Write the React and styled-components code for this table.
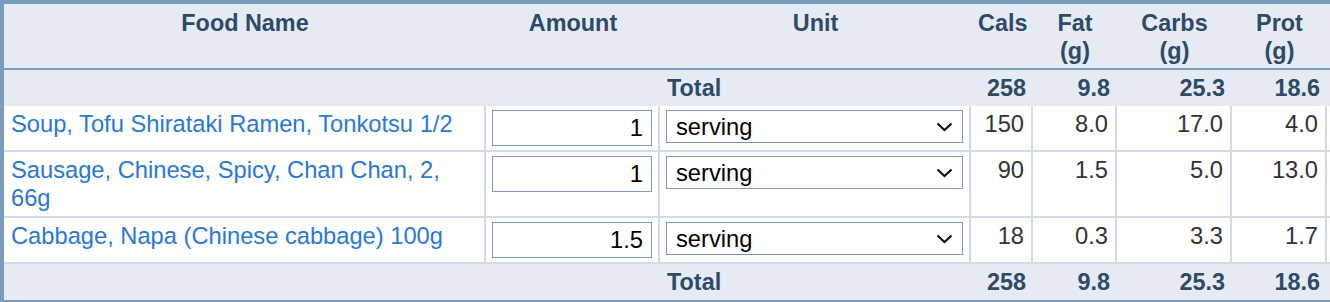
import React from "react";
import styled, { createGlobalStyle } from "styled-components";

const GlobalStyle = createGlobalStyle`
  body {
    margin: 0;
    background: #ffffff;
    overflow: hidden;
    font-family: "Liberation Sans", Arial, sans-serif;
  }
`;

const foods = [
  { name: "Soup, Tofu Shirataki Ramen, Tonkotsu 1/2", amount: "1", cals: "150", fat: "8.0", carbs: "17.0", prot: "4.0" },
  { name: "Sausage, Chinese, Spicy, Chan Chan, 2, 66g", amount: "1", cals: "90", fat: "1.5", carbs: "5.0", prot: "13.0" },
  { name: "Cabbage, Napa (Chinese cabbage) 100g", amount: "1.5", cals: "18", fat: "0.3", carbs: "3.3", prot: "1.7" },
];

const totals = { cals: "258", fat: "9.8", carbs: "25.3", prot: "18.6" };

const Table = styled.table`
  width: 1391px;
  table-layout: fixed;
  border-collapse: separate;
  border-spacing: 0;
  border: 4px solid #7a9cbc;
  font-family: "Liberation Sans", Arial, sans-serif;
  font-size: 23.7px;
  line-height: 28px;
`;

const HeadCell = styled.th`
  background: #e6ebf3;
  color: #2e4a66;
  font-size: 23.4px;
  font-weight: bold;
  text-align: center;
  vertical-align: top;
  padding: 5px 7px 3px;
  border-bottom: 2px solid #7a9cbc;
`;

const TotalCell = styled.td`
  background: #e6ebf3;
  color: #2e4a66;
  font-size: 23.4px;
  font-weight: bold;
  text-align: ${(p) => (p.$num ? "right" : "left")};
  vertical-align: top;
  padding: 4px 7px;
`;

const Cell = styled.td`
  background: #ffffff;
  color: #333333;
  vertical-align: top;
  text-align: ${(p) => (p.$num ? "right" : "left")};
  padding: ${(p) => (p.$control ? "4px 6px" : "4px 7px")};
  border-right: 2px solid #d3dbe6;
  border-bottom: 2px solid #d3dbe6;
`;

const FoodLink = styled.a`
  color: #2878d8;
  text-decoration: none;
  cursor: pointer;
`;

const AmountInput = styled.input`
  box-sizing: border-box;
  display: block;
  width: 160px;
  height: 36px;
  margin: 0;
  padding: 0 8px;
  border: 1px solid #7b9bbd;
  border-radius: 0;
  font-family: "Liberation Sans", Arial, sans-serif;
  font-size: 23.7px;
  color: #000000;
  text-align: right;
  background: #ffffff;
`;

const SelectWrap = styled.div`
  position: relative;
  width: 297px;
  height: 33px;
`;

const UnitSelect = styled.select`
  box-sizing: border-box;
  display: block;
  width: 100%;
  height: 33px;
  margin: 0;
  padding: 0 30px 0 9px;
  border: 1px solid #7b9bbd;
  border-radius: 0;
  appearance: none;
  -webkit-appearance: none;
  font-family: "Liberation Sans", Arial, sans-serif;
  font-size: 23.7px;
  color: #000000;
  background: #ffffff;
`;

const Chevron = styled.svg`
  position: absolute;
  right: 10px;
  top: 12px;
  width: 17px;
  height: 10px;
  pointer-events: none;
`;

const TotalRow = () => (
  <tr>
    <TotalCell />
    <TotalCell />
    <TotalCell>Total</TotalCell>
    <TotalCell $num>{totals.cals}</TotalCell>
    <TotalCell $num>{totals.fat}</TotalCell>
    <TotalCell $num>{totals.carbs}</TotalCell>
    <TotalCell $num>{totals.prot}</TotalCell>
    <TotalCell />
  </tr>
);

export default function App() {
  return (
    <>
      <GlobalStyle />
      <Table>
        <colgroup>
          <col style={{ width: 482 }} />
          <col style={{ width: 174 }} />
          <col style={{ width: 311 }} />
          <col style={{ width: 62 }} />
          <col style={{ width: 84 }} />
          <col style={{ width: 115 }} />
          <col style={{ width: 95 }} />
          <col style={{ width: 60 }} />
        </colgroup>
        <thead>
          <tr>
            <HeadCell>Food Name</HeadCell>
            <HeadCell>Amount</HeadCell>
            <HeadCell>Unit</HeadCell>
            <HeadCell>Cals</HeadCell>
            <HeadCell>
              Fat
              <br />
              (g)
            </HeadCell>
            <HeadCell>
              Carbs
              <br />
              (g)
            </HeadCell>
            <HeadCell>
              Prot
              <br />
              (g)
            </HeadCell>
            <HeadCell />
          </tr>
        </thead>
        <tbody>
          <TotalRow />
          {foods.map((f) => (
            <tr key={f.name}>
              <Cell>
                <FoodLink>{f.name}</FoodLink>
              </Cell>
              <Cell $control>
                <AmountInput defaultValue={f.amount} />
              </Cell>
              <Cell $control>
                <SelectWrap>
                  <UnitSelect defaultValue="serving">
                    <option value="serving">serving</option>
                    <option value="g">g</option>
                  </UnitSelect>
                  <Chevron viewBox="0 0 17 10">
                    <path d="M1.5 1.5 L8.5 8 L15.5 1.5" fill="none" stroke="#111" strokeWidth="2.2" />
                  </Chevron>
                </SelectWrap>
              </Cell>
              <Cell $num>{f.cals}</Cell>
              <Cell $num>{f.fat}</Cell>
              <Cell $num>{f.carbs}</Cell>
              <Cell $num>{f.prot}</Cell>
              <Cell />
            </tr>
          ))}
          <TotalRow />
        </tbody>
      </Table>
    </>
  );
}
